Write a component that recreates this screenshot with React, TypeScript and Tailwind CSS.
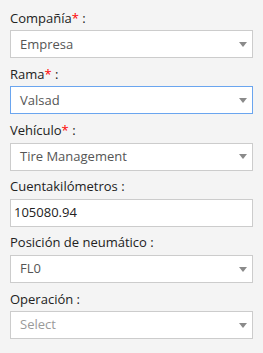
import React from 'react';

interface FieldProps {
  label: string;
  required?: boolean;
  value: string;
  kind?: 'select' | 'input';
  focused?: boolean;
  placeholder?: boolean;
}

const Arrow = () => (
  <svg width="8" height="5" viewBox="0 0 8 5" className="shrink-0">
    <path d="M0 0 H8 L4 5 Z" fill="#8a8a8a" />
  </svg>
);

const Field: React.FC<FieldProps> = ({ label, required, value, kind = 'select', focused, placeholder }) => {
  return (
    <div className="mb-[6.6px]">
      <div className="text-[13px] leading-[18.6px] text-[#222] mb-[3px]">
        {label}
        {required && <span className="text-[#ff0000]">*</span>}
        {' :'}
      </div>
      {kind === 'select' ? (
        <div
          className={`h-[28px] flex items-center justify-between bg-white border pl-[9px] pr-[5px] ${
            focused ? 'border-[#6aa5ef]' : 'border-[#cccccc]'
          }`}
        >
          <span className={`text-[13px] ${placeholder ? 'text-[#9a9a9a]' : 'text-[#555555]'}`}>{value}</span>
          <Arrow />
        </div>
      ) : (
        <div className="h-[28px] flex items-center bg-white border border-[#cccccc] pl-[3px]">
          <span className="text-[13px] text-[#222]">{value}</span>
        </div>
      )}
    </div>
  );
};

export default function App() {
  return (
    <div className="w-[263px] h-[353px] bg-[#f4f4f4] px-[10px] pt-[8.7px]" style={{ fontFamily: '"Open Sans", sans-serif' }}>
      <Field label="Compañía" required value="Empresa" />
      <Field label="Rama" required value="Valsad" focused />
      <Field label="Vehículo" required value="Tire Management" />
      <Field label="Cuentakilómetros" value="105080.94" kind="input" />
      <Field label="Posición de neumático" value="FL0" />
      <Field label="Operación" value="Select" placeholder />
    </div>
  );
}
